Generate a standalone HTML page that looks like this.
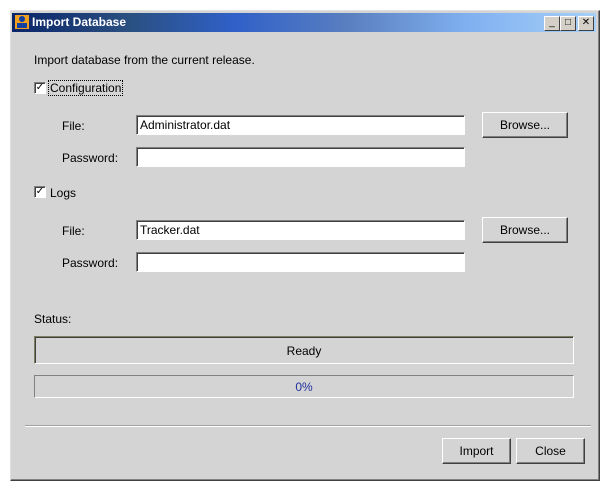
<!DOCTYPE html>
<html><head><style>
body{margin:0;width:610px;height:490px;background:#fff;position:relative;font-family:"Liberation Sans",sans-serif;font-size:12px;color:#000;overflow:hidden}
.a{position:absolute}
.win{left:10px;top:10px;width:588px;height:469px;background:#d4d4d4;border:1px solid;border-color:#e0e0e0 #404040 #404040 #e0e0e0;box-shadow:inset -1px -1px 0 #808080}
.title{left:12px;top:13px;width:584px;height:19px;background:linear-gradient(90deg,#0a246a 0%,#2a5080 20%,#3060c8 38%,#5a80c0 58%,#80b0f0 78%,#a6d0f8 100%)}
.title span{position:absolute;left:20px;top:2px;color:#fff;font-weight:bold;font-size:12px}
.tb{top:16px;width:14px;height:13px;background:#d4d0c8;border:1px solid;border-color:#fff #404040 #404040 #fff;font-size:10px;line-height:12px;text-align:center}
.inp{background:#fff;border:1px solid;border-color:#808080 #fff #fff #808080;box-shadow:inset 1px 1px 0 #404040;height:18px;width:324px;line-height:19px;padding-left:3px;box-sizing:content-box}
.btn{border:1px solid;border-color:#fff #404040 #404040 #fff;box-shadow:inset -1px -1px 0 #808080;text-align:center;line-height:25px;height:24px}
.cb{width:10px;height:10px;background:#fff;border:1px solid;border-color:#808080 #fff #fff #808080;box-shadow:inset 1px 1px 0 #404040;font-size:10px;line-height:10px;text-align:center}
</style></head><body>
<div class="a win"></div>
<div class="a title"><div class="a" style="left:3px;top:2px;width:14px;height:14px;background:#f0a020"><div class="a" style="left:4px;top:1px;width:6px;height:6px;background:#1040a0;border-radius:3px"></div><div class="a" style="left:2px;top:8px;width:10px;height:5px;background:#1040a0"></div></div><span>Import Database</span></div>
<div class="a tb" style="left:544px">_</div>
<div class="a tb" style="left:560px">□</div>
<div class="a tb" style="left:578px">✕</div>
<div class="a" style="left:34px;top:53px">Import database from the current release.</div>
<div class="a cb" style="left:34px;top:82px">✓</div>
<div class="a" style="left:48px;top:80px;border:1px dotted #000;padding:0 1px">Configuration</div>
<div class="a" style="left:62px;top:119px">File:</div>
<div class="a inp" style="left:136px;top:115px">Administrator.dat</div>
<div class="a btn" style="left:482px;top:112px;width:84px">Browse...</div>
<div class="a" style="left:62px;top:151px">Password:</div>
<div class="a inp" style="left:136px;top:147px"></div>
<div class="a cb" style="left:34px;top:186px">✓</div>
<div class="a" style="left:50px;top:186px">Logs</div>
<div class="a" style="left:62px;top:224px">File:</div>
<div class="a inp" style="left:136px;top:220px">Tracker.dat</div>
<div class="a btn" style="left:482px;top:217px;width:84px">Browse...</div>
<div class="a" style="left:62px;top:256px">Password:</div>
<div class="a inp" style="left:136px;top:252px"></div>
<div class="a" style="left:34px;top:312px">Status:</div>
<div class="a" style="left:34px;top:336px;width:538px;height:26px;border:1px solid;border-color:#808060 #fff #fff #808060;box-shadow:inset 1px 1px 0 #404040;text-align:center;line-height:29px">Ready</div>
<div class="a" style="left:34px;top:375px;width:538px;height:21px;border:1px solid;border-color:#808080 #fff #fff #808080;text-align:center;line-height:23px;color:#2030a0">0%</div>
<div class="a" style="left:25px;top:425px;width:566px;height:1px;background:#a0a0a0;border-bottom:1px solid #fff"></div>
<div class="a btn" style="left:442px;top:438px;width:67px">Import</div>
<div class="a btn" style="left:516px;top:438px;width:67px">Close</div>
</body></html>
